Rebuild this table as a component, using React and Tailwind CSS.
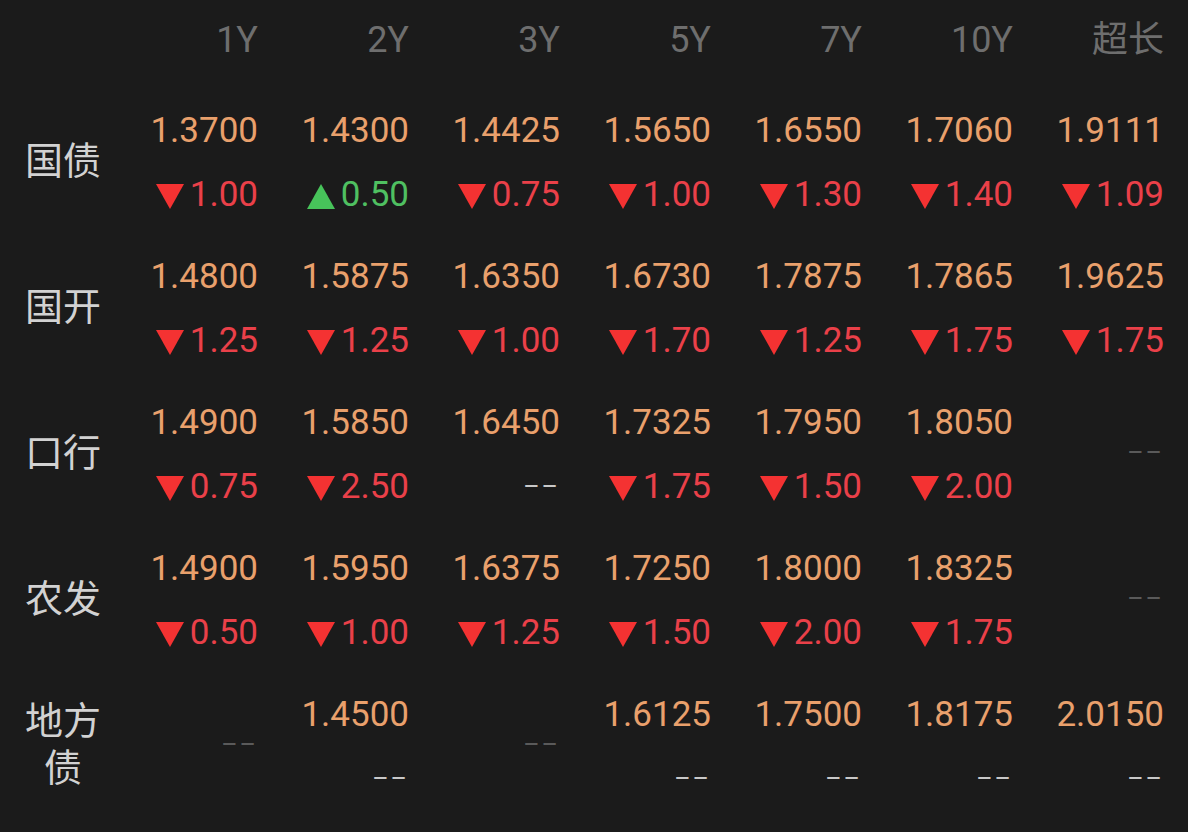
const cols = ["1Y", "2Y", "3Y", "5Y", "7Y", "10Y", "超长"];

// v: yield, d: change (negative = down), null = no data
const rows = [
  {
    name: ["国债"],
    cells: [
      ["1.3700", -1.0], ["1.4300", 0.5], ["1.4425", -0.75], ["1.5650", -1.0],
      ["1.6550", -1.3], ["1.7060", -1.4], ["1.9111", -1.09],
    ],
  },
  {
    name: ["国开"],
    cells: [
      ["1.4800", -1.25], ["1.5875", -1.25], ["1.6350", -1.0], ["1.6730", -1.7],
      ["1.7875", -1.25], ["1.7865", -1.75], ["1.9625", -1.75],
    ],
  },
  {
    name: ["口行"],
    cells: [
      ["1.4900", -0.75], ["1.5850", -2.5], ["1.6450", null], ["1.7325", -1.75],
      ["1.7950", -1.5], ["1.8050", -2.0], null,
    ],
  },
  {
    name: ["农发"],
    cells: [
      ["1.4900", -0.5], ["1.5950", -1.0], ["1.6375", -1.25], ["1.7250", -1.5],
      ["1.8000", -2.0], ["1.8325", -1.75], null,
    ],
  },
  {
    name: ["地方", "债"],
    cells: [
      null, ["1.4500", null], null, ["1.6125", null],
      ["1.7500", null], ["1.8175", null], ["2.0150", null],
    ],
  },
];

const Dash = ({ dim }) => (
  <span className={`text-[25px] tracking-[2px] ${dim ? "text-[#5a5a5a]" : "text-[#c8c8c8]"}`}>––</span>
);

const Change = ({ d }) => {
  if (d === null) return <Dash />;
  const up = d > 0;
  return (
    <span className={`flex items-center gap-[6px] ${up ? "text-[#4fc061]" : "text-[#ea4049]"}`}>
      <svg width="28" height="25" viewBox="0 0 28 25" className="mt-[2px]">
        {up ? (
          <polygon points="14,0 28,25 0,25" fill="#47c35a" />
        ) : (
          <polygon points="0,0 28,0 14,25" fill="#f43232" />
        )}
      </svg>
      {Math.abs(d).toFixed(2)}
    </span>
  );
};

const Cell = ({ cell }) => {
  if (!cell) {
    return (
      <div className="h-[128px] flex items-center justify-end">
        <Dash dim />
      </div>
    );
  }
  return (
    <div className="flex flex-col items-end pt-[2px]">
      <div className="h-[64px] flex items-center text-[#e9a06c]">{cell[0]}</div>
      <div className="h-[64px] flex items-center">
        <Change d={cell[1]} />
      </div>
    </div>
  );
};

export default function App() {
  return (
    <div
      className="w-[1188px] h-[832px] bg-[#1b1b1b] overflow-hidden"
      style={{ fontFamily: "Roboto, 'Noto Sans CJK SC', sans-serif" }}
    >
      <div className="grid grid-cols-[107px_repeat(7,151px)] text-[35px]">
        <div className="h-[97px]" />
        {cols.map((c) => (
          <div key={c} className="h-[80px] flex items-center justify-end text-[#6e6e6e] text-[36px]">
            {c}
          </div>
        ))}
        {rows.map((r) => (
          <div key={r.name.join("")} className="contents">
            <div className="h-[146px] pl-[25px]">
              <div className="h-[128px] inline-flex flex-col items-center justify-center text-[38px] text-[#d2d2d2] leading-[47px]">
                {r.name.map((n) => (
                  <span key={n}>{n}</span>
                ))}
              </div>
            </div>
            {r.cells.map((c, i) => (
              <div key={i} className="h-[146px]">
                <Cell cell={c} />
              </div>
            ))}
          </div>
        ))}
      </div>
    </div>
  );
}
